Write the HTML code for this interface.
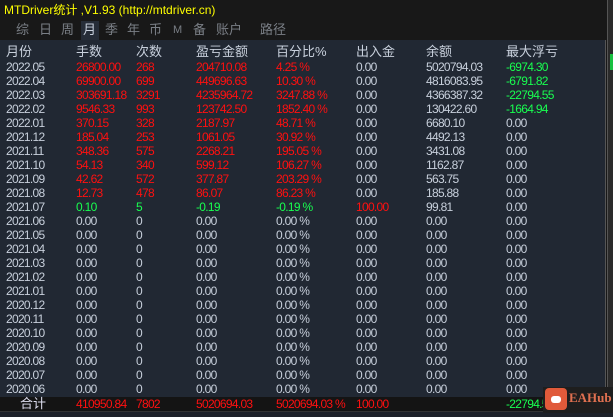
<!DOCTYPE html>
<html><head><meta charset="utf-8"><style>
*{margin:0;padding:0;box-sizing:border-box}
body{width:613px;height:417px;background:#181818;position:relative;overflow:hidden;font-family:"Liberation Sans","Noto Sans CJK SC",sans-serif;font-size:12px;letter-spacing:-0.7px;color:#c8d0dc}
.t{position:absolute;white-space:nowrap;line-height:14px}
#title{left:4px;top:3px;color:#ffff00;font-size:12px;letter-spacing:0}
.tab{position:absolute;top:22px;color:#7a7f86;font-size:13px;line-height:16px;letter-spacing:0}
#panel{position:absolute;left:0;top:40px;width:606px;height:358px;background:#212833;border-right:1px solid #555}
#foot{position:absolute;left:0;top:397px;width:606px;height:14px;background:#141414}
#bot{position:absolute;left:0;top:411px;width:613px;height:6px;background:#1d2129;border-top:1px solid #333}
.r{color:#ff1010}.g{color:#18ff50}
</style></head><body>
<div class="t" id="title">MTDriver统计 ,V1.93 (http://mtdriver.cn)</div>
<div style="position:absolute;left:81px;top:21px;width:18px;height:19px;background:#262d38"></div>
<div class="tab" style="left:16px">综</div>
<div class="tab" style="left:39px">日</div>
<div class="tab" style="left:61px">周</div>
<div class="tab" style="left:83px;color:#c8d0dc">月</div>
<div class="tab" style="left:105px">季</div>
<div class="tab" style="left:127px">年</div>
<div class="tab" style="left:149px">币</div>
<div class="tab" style="left:173px;font-size:11px">M</div>
<div class="tab" style="left:193px">备</div>
<div class="tab" style="left:216px">账户</div>
<div class="tab" style="left:260px">路径</div>
<div style="position:absolute;left:607px;top:0;width:6px;height:411px;background:#2a2a2a;border-left:1px solid #555"></div>
<div style="position:absolute;left:610px;top:54px;width:3px;height:16px;background:#18c040"></div>
<div id="panel"></div>
<div id="foot"></div>
<div id="bot"></div>
<div id="rows"></div>
<script>
const X=[6,76,136,196,276,356,426,506];
const H=["月份","手数","次数","盈亏金额","百分比%","出入金","余额","最大浮亏"];
const D=[
["2022.05","26800.00","268","204710.08","4.25 %","0.00","5020794.03","-6974.30","rrrr","g"],
["2022.04","69900.00","699","449696.63","10.30 %","0.00","4816083.95","-6791.82","rrrr","g"],
["2022.03","303691.18","3291","4235964.72","3247.88 %","0.00","4366387.32","-22794.55","rrrr","g"],
["2022.02","9546.33","993","123742.50","1852.40 %","0.00","130422.60","-1664.94","rrrr","g"],
["2022.01","370.15","328","2187.97","48.71 %","0.00","6680.10","0.00","rrrr",""],
["2021.12","185.04","253","1061.05","30.92 %","0.00","4492.13","0.00","rrrr",""],
["2021.11","348.36","575","2268.21","195.05 %","0.00","3431.08","0.00","rrrr",""],
["2021.10","54.13","340","599.12","106.27 %","0.00","1162.87","0.00","rrrr",""],
["2021.09","42.62","572","377.87","203.29 %","0.00","563.75","0.00","rrrr",""],
["2021.08","12.73","478","86.07","86.23 %","0.00","185.88","0.00","rrrr",""],
["2021.07","0.10","5","-0.19","-0.19 %","100.00","99.81","0.00","gggg","R"]];
const m=["2021.06","2021.05","2021.04","2021.03","2021.02","2021.01","2020.12","2020.11","2020.10","2020.09","2020.08","2020.07","2020.06"];
m.forEach(x=>D.push([x,"0.00","0","0.00","0.00 %","0.00","0.00","0.00","",""]));
let h="";
H.forEach((t,i)=>h+=`<div class="t" style="left:${X[i]}px;top:44px;font-size:13px;line-height:16px;letter-spacing:0">${t}</div>`);
D.forEach((r,j)=>{const y=60+j*14;
for(let i=0;i<8;i++){let c="";
if(i>=1&&i<=4&&r[8])c=r[8][0];
if(i==7&&r[9]=="g")c="g";
if(i==5&&r[9]=="R")c="r";
h+=`<div class="t ${c}" style="left:${X[i]}px;top:${y}px">${r[i]}</div>`;}});
const F=[[20,"合计",""],[76,"410950.84","r"],[136,"7802","r"],[196,"5020694.03","r"],[276,"5020694.03 %","r"],[356,"100.00","r"],[506,"-22794.55","g"]];
F.forEach(f=>h+=`<div class="t ${f[2]}" style="left:${f[0]}px;top:397px;${f[1]=="合计"?"font-size:13px;letter-spacing:0;color:#dde":""}">${f[1]}</div>`);
document.getElementById("rows").innerHTML=h;
</script>
<div style="position:absolute;left:543px;top:387px;width:70px;height:26px;background:#1e1e1e"></div>
<div style="position:absolute;left:545px;top:388px;width:22px;height:22px;background:#e05a3a;border-radius:4px"></div>
<div style="position:absolute;left:551px;top:396px;width:10px;height:7px;background:#fff;border-radius:3px"></div>
<div class="t" style="left:569px;top:391px;color:#e07050;font-weight:bold;font-size:13px;letter-spacing:0;font-family:'Liberation Serif',serif">EAHub</div>
</body></html>
